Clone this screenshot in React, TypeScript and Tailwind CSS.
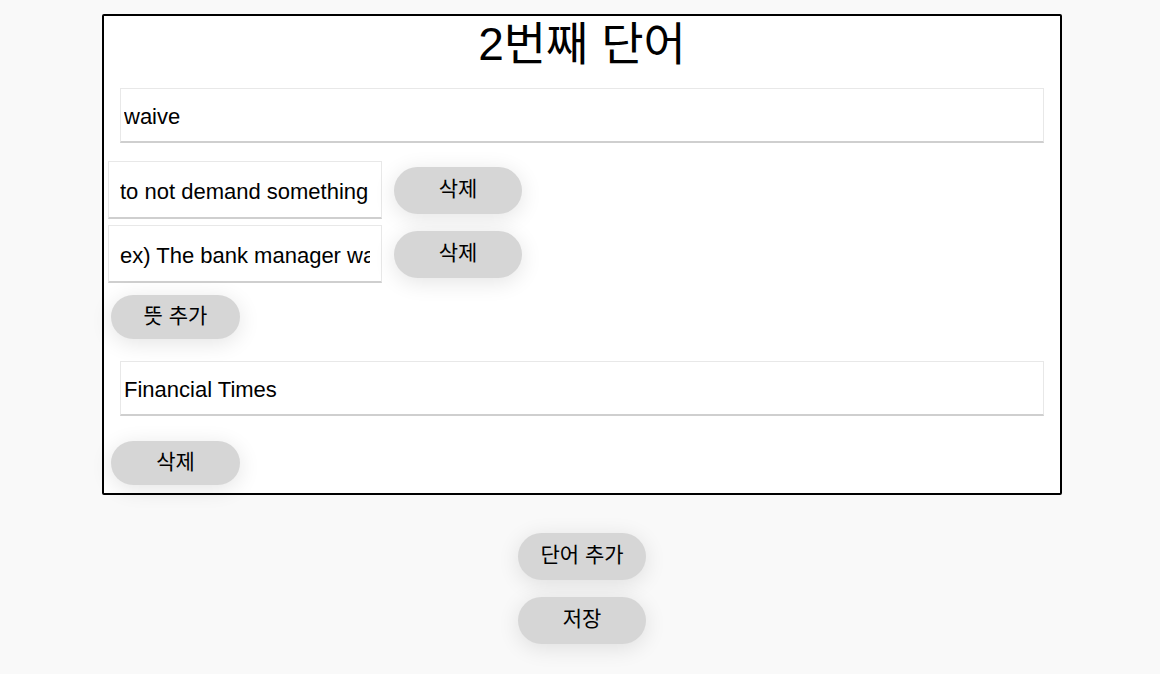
import React from 'react'

const font = { fontFamily: '"Liberation Sans", "Noto Sans CJK KR", sans-serif' }

function PillButton({ label, small, className = '' }: { label: string; small?: boolean; className?: string }) {
  return (
    <button
      className={`${small ? 'h-[44px] w-[129px]' : 'h-[47px] w-[128px]'} shrink-0 rounded-full bg-[#d6d6d6] pb-[3px] text-[21px] text-black shadow-[0_4px_22px_rgba(0,0,0,0.11)] ${className}`}
    >
      {label}
    </button>
  )
}

function Field({ value, className = '' }: { value: string; className?: string }) {
  return (
    <input
      readOnly
      defaultValue={value}
      className={`border border-[#e8e8e8] border-b-2 border-b-[#cfcfcf] bg-white pt-[4px] text-[22px] text-black outline-none ${className}`}
    />
  )
}

export default function App() {
  const meanings = ['to not demand something', 'ex) The bank manager waived the fee for the customer']

  return (
    <div className="min-h-[674px] bg-[#f9f9f9] pl-[4px] pt-[14px]" style={font}>
      <div className="mx-auto w-[960px] rounded-[2px] border-2 border-black bg-white pb-[8px]">
        <h1 className="text-center text-[46px] leading-[56px] text-black">2번째 단어</h1>

        <div className="mt-[16px] px-[16px]">
          <Field value="waive" className="h-[55px] w-full px-[3px]" />
        </div>

        <div className="mt-[18px] flex flex-col gap-[6px] pl-[4px]">
          {meanings.map((m) => (
            <div key={m} className="flex items-start gap-[12px]">
              <Field value={m} className="h-[58px] w-[274px] px-[11px]" />
              <PillButton label="삭제" className="mt-[6px]" />
            </div>
          ))}
        </div>

        <div className="mt-[12px] pl-[7px]">
          <PillButton label="뜻 추가" small />
        </div>

        <div className="mt-[22px] px-[16px]">
          <Field value="Financial Times" className="h-[55px] w-full px-[3px]" />
        </div>

        <div className="mt-[25px] pl-[7px]">
          <PillButton label="삭제" small />
        </div>
      </div>

      <div className="mt-[38px] flex flex-col items-center gap-[17px]">
        <PillButton label="단어 추가" />
        <PillButton label="저장" />
      </div>
    </div>
  )
}
